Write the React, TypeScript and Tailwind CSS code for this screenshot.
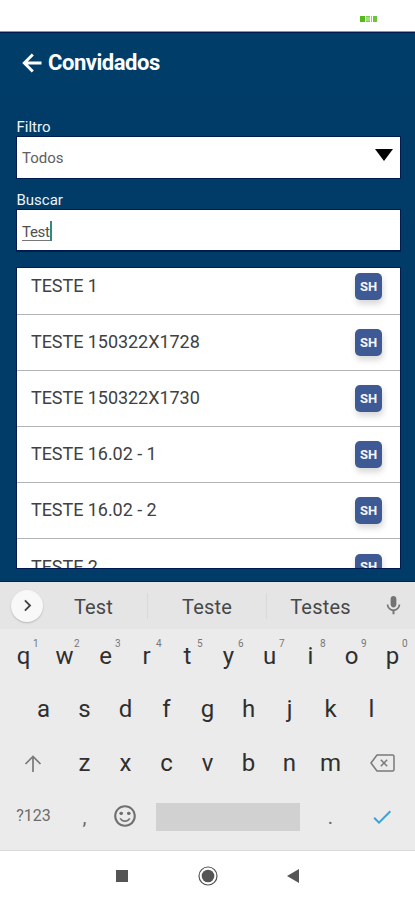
import { memo } from "react";
import type { ReactNode } from "react";
import {
  MdCheck,
  MdChevronRight,
  MdMic,
  MdSentimentSatisfiedAlt,
} from "react-icons/md";

const GUESTS = [
  "TESTE 1",
  "TESTE 150322X1728",
  "TESTE 150322X1730",
  "TESTE 16.02 - 1",
  "TESTE 16.02 - 2",
  "TESTE 2",
];

const TOP_ROW = ["q", "w", "e", "r", "t", "y", "u", "i", "o", "p"];
const MIDDLE_ROW = ["a", "s", "d", "f", "g", "h", "j", "k", "l"];
const BOTTOM_ROW = ["z", "x", "c", "v", "b", "n", "m"];

function StatusBar() {
  return (
    <div className="h-8 shrink-0 bg-white border-b border-[#8d93ad] flex justify-end pr-[38px] pt-4">
      <div className="flex gap-px h-[6px]">
        <span className="w-[5px] bg-[#55b91c]" />
        <span className="w-1 bg-[#a5dc7c] border-y border-[#7fcb4d]" />
        <span className="w-px bg-[#8fd161]" />
        <span className="w-[4px] bg-[#6cc438]" />
      </div>
    </div>
  );
}

function Header() {
  return (
    <header className="h-16 shrink-0 border-t border-[#001a52] bg-[#003d69] flex items-center pl-[22px] gap-[6px] text-white">
      <svg width="20" height="20" viewBox="0 0 20 20" fill="none" stroke="currentColor" strokeWidth="2.9" className="mt-[-3px]">
        <path d="M19.5 10H3M10.8 1.5L2.3 10l8.5 8.5" />
      </svg>
      <h1 className="text-[22px] leading-none font-bold tracking-[-0.45px] mt-[-3px]">Convidados</h1>
    </header>
  );
}

interface FieldProps {
  label: string;
  children: ReactNode;
}

function Field({ label, children }: FieldProps) {
  return (
    <div>
      <div className="h-[18px] pl-[0.5px] text-[15px] leading-[19px] text-[#eef3f9]">{label}</div>
      {children}
    </div>
  );
}

function GuestRow({ name }: { name: string }) {
  return (
    <li className="h-[56.1px] shrink-0 flex items-center justify-between pl-[14px] pr-[18px] border-b border-[#b4b4b4]">
      <span className="text-[18px] mt-[-2px] tracking-[-0.05px] text-[#414141]">{name}</span>
      <span className="size-[27px] rounded-[5px] bg-[#3d5a94] text-[#f3f6fb] text-[13px] font-bold flex items-center justify-center shadow-[1px_4px_6px_rgba(0,0,0,0.16)]">
        SH
      </span>
    </li>
  );
}

function Key({ label, hint }: { label: string; hint?: string }) {
  return (
    <div className="relative w-[41px] h-full flex items-center justify-center text-[24px] text-[#2f2f2f]">
      {label}
      {hint && (
        <span className="absolute left-[30px] top-[10px] text-[10px] leading-none text-[#777]">{hint}</span>
      )}
    </div>
  );
}

function Suggestions() {
  return (
    <div className="h-[47px] flex items-center bg-[#e5e5e5] text-[20px] tracking-[0.2px] text-[#484848]">
      <div className="ml-[11px] size-8 rounded-full bg-[#f8f8f8] shadow-[0_1px_2px_rgba(0,0,0,0.2)] flex items-center justify-center">
        <MdChevronRight size={23} color="#444" />
      </div>
      <div className="w-[104px] text-center pt-[2px] pr-[3px]">Test</div>
      <div className="w-px h-[26px] bg-[#d9d9d9]" />
      <div className="w-[118px] text-center pt-[2px]">Teste</div>
      <div className="w-px h-[26px] bg-[#d9d9d9]" />
      <div className="w-[107px] text-center pt-[2px]">Testes</div>
      <MdMic size={23} color="#737373" className="ml-[8px]" />
    </div>
  );
}

function Keyboard() {
  return (
    <div className="h-[269px] shrink-0 bg-[#ebebeb] border-b border-[#dadada]">
      <Suggestions />
      <div className="h-[53px] pl-[3px] flex">
        {TOP_ROW.map((k, i) => (
          <Key key={k} label={k} hint={String((i + 1) % 10)} />
        ))}
      </div>
      <div className="h-[54px] pl-[23px] flex">
        {MIDDLE_ROW.map((k) => (
          <Key key={k} label={k} />
        ))}
      </div>
      <div className="h-[53px] pl-[3px] flex items-center text-[#7a7a7a]">
        <div className="w-[61px] flex justify-center">
          <svg width="18" height="18" viewBox="0 0 18 18" fill="none" stroke="currentColor" strokeWidth="1.7" className="ml-[-1px] mt-[3px]">
            <path d="M9 17V2M1.5 9L9 1.5 16.5 9" />
          </svg>
        </div>
        {BOTTOM_ROW.map((k) => (
          <Key key={k} label={k} />
        ))}
        <div className="w-[61px] flex justify-center">
          <svg width="25" height="18" viewBox="0 0 25 18" fill="none" stroke="currentColor" strokeWidth="1.5" className="ml-[1px] mt-[1px]">
            <path d="M7 1h15.5a1.5 1.5 0 0 1 1.5 1.500v13a1.500 1.500 0 0 1-1.500 1.500H7L1 9z" strokeLinejoin="round" />
            <path d="M10.800 5.800l6.400 6.400M17.200 5.800l-6.400 6.400" />
          </svg>
        </div>
      </div>
      <div className="h-[53px] pl-[3px] flex items-center text-[#6c6c6c]">
        <div className="w-[61px] text-center text-[16px]">?123</div>
        <div className="w-[41px] text-center text-[20px] pt-[3px]">,</div>
        <div className="w-[41px] flex justify-center">
          <MdSentimentSatisfiedAlt size={26} color="#707070" className="ml-[-1px]" />
        </div>
        <div className="ml-[10px] mt-[3px] w-[144px] h-[28px] bg-[#d1d1d1]" />
        <div className="ml-[10px] w-[41px] text-center text-[20px] pt-[2px]">.</div>
        <div className="w-[61px] flex justify-center">
          <MdCheck size={24} color="#3aa2dc" className="mt-[3px]" />
        </div>
      </div>
    </div>
  );
}

function NavBar() {
  return (
    <div className="h-[49px] shrink-0 bg-white flex items-center text-[#555]">
      <div className="ml-[116px] size-3 bg-[#555]" />
      <svg width="20" height="20" viewBox="0 0 20 20" className="ml-[70px]">
        <circle cx="10" cy="10" r="9" fill="none" stroke="currentColor" strokeWidth="1.2" />
        <circle cx="10" cy="10" r="6.3" fill="currentColor" />
      </svg>
      <svg width="12" height="14" viewBox="0 0 12 14" className="ml-[69px]">
        <path d="M0 7L12 0v14z" fill="currentColor" />
      </svg>
    </div>
  );
}

function App() {
  return (
    <div className="w-[415px] h-[900px] overflow-hidden flex flex-col bg-[#003c67] font-[Roboto,sans-serif]">
      <StatusBar />
      <Header />
      <main className="h-[486px] shrink-0 flex flex-col pl-4 pt-[22px] pr-[14px] border-b border-[#001a5c]">
        <Field label="Filtro">
          <div className="h-[43px] bg-white border border-[#001b52] flex items-center justify-between pl-[5px] pr-[7px] text-[15px] text-[#606060]">
            <span className="mt-[2px]">Todos</span>
            <svg width="18" height="12" viewBox="0 0 18 12" className="mt-[-6px]">
              <path d="M0 0h18L9 12z" fill="#000" />
            </svg>
          </div>
        </Field>
        <div className="mt-[12px]">
          <Field label="Buscar">
            <div className="h-[43px] bg-white border border-b-2 border-[#001b52] flex items-center pl-[5px] text-[15px] text-[#505050]">
              <span className="mt-[4px] border-b border-[#777] leading-[16px] tracking-[-0.3px]">Test</span>
              <span className="w-[2px] h-5 mt-[2px] bg-[#2f8c7c]" />
            </div>
          </Field>
        </div>
        {/* the first guest is partly scrolled under the top edge */}
        <ul className="mt-[15px] h-[302px] shrink-0 flex flex-col overflow-hidden bg-white border border-[#001b52]">
          <li className="h-0 shrink-0 mt-[-9px]" />
          {GUESTS.map((name) => (
            <GuestRow key={name} name={name} />
          ))}
        </ul>
      </main>
      <Keyboard />
      <NavBar />
    </div>
  );
}

export default memo(App);
